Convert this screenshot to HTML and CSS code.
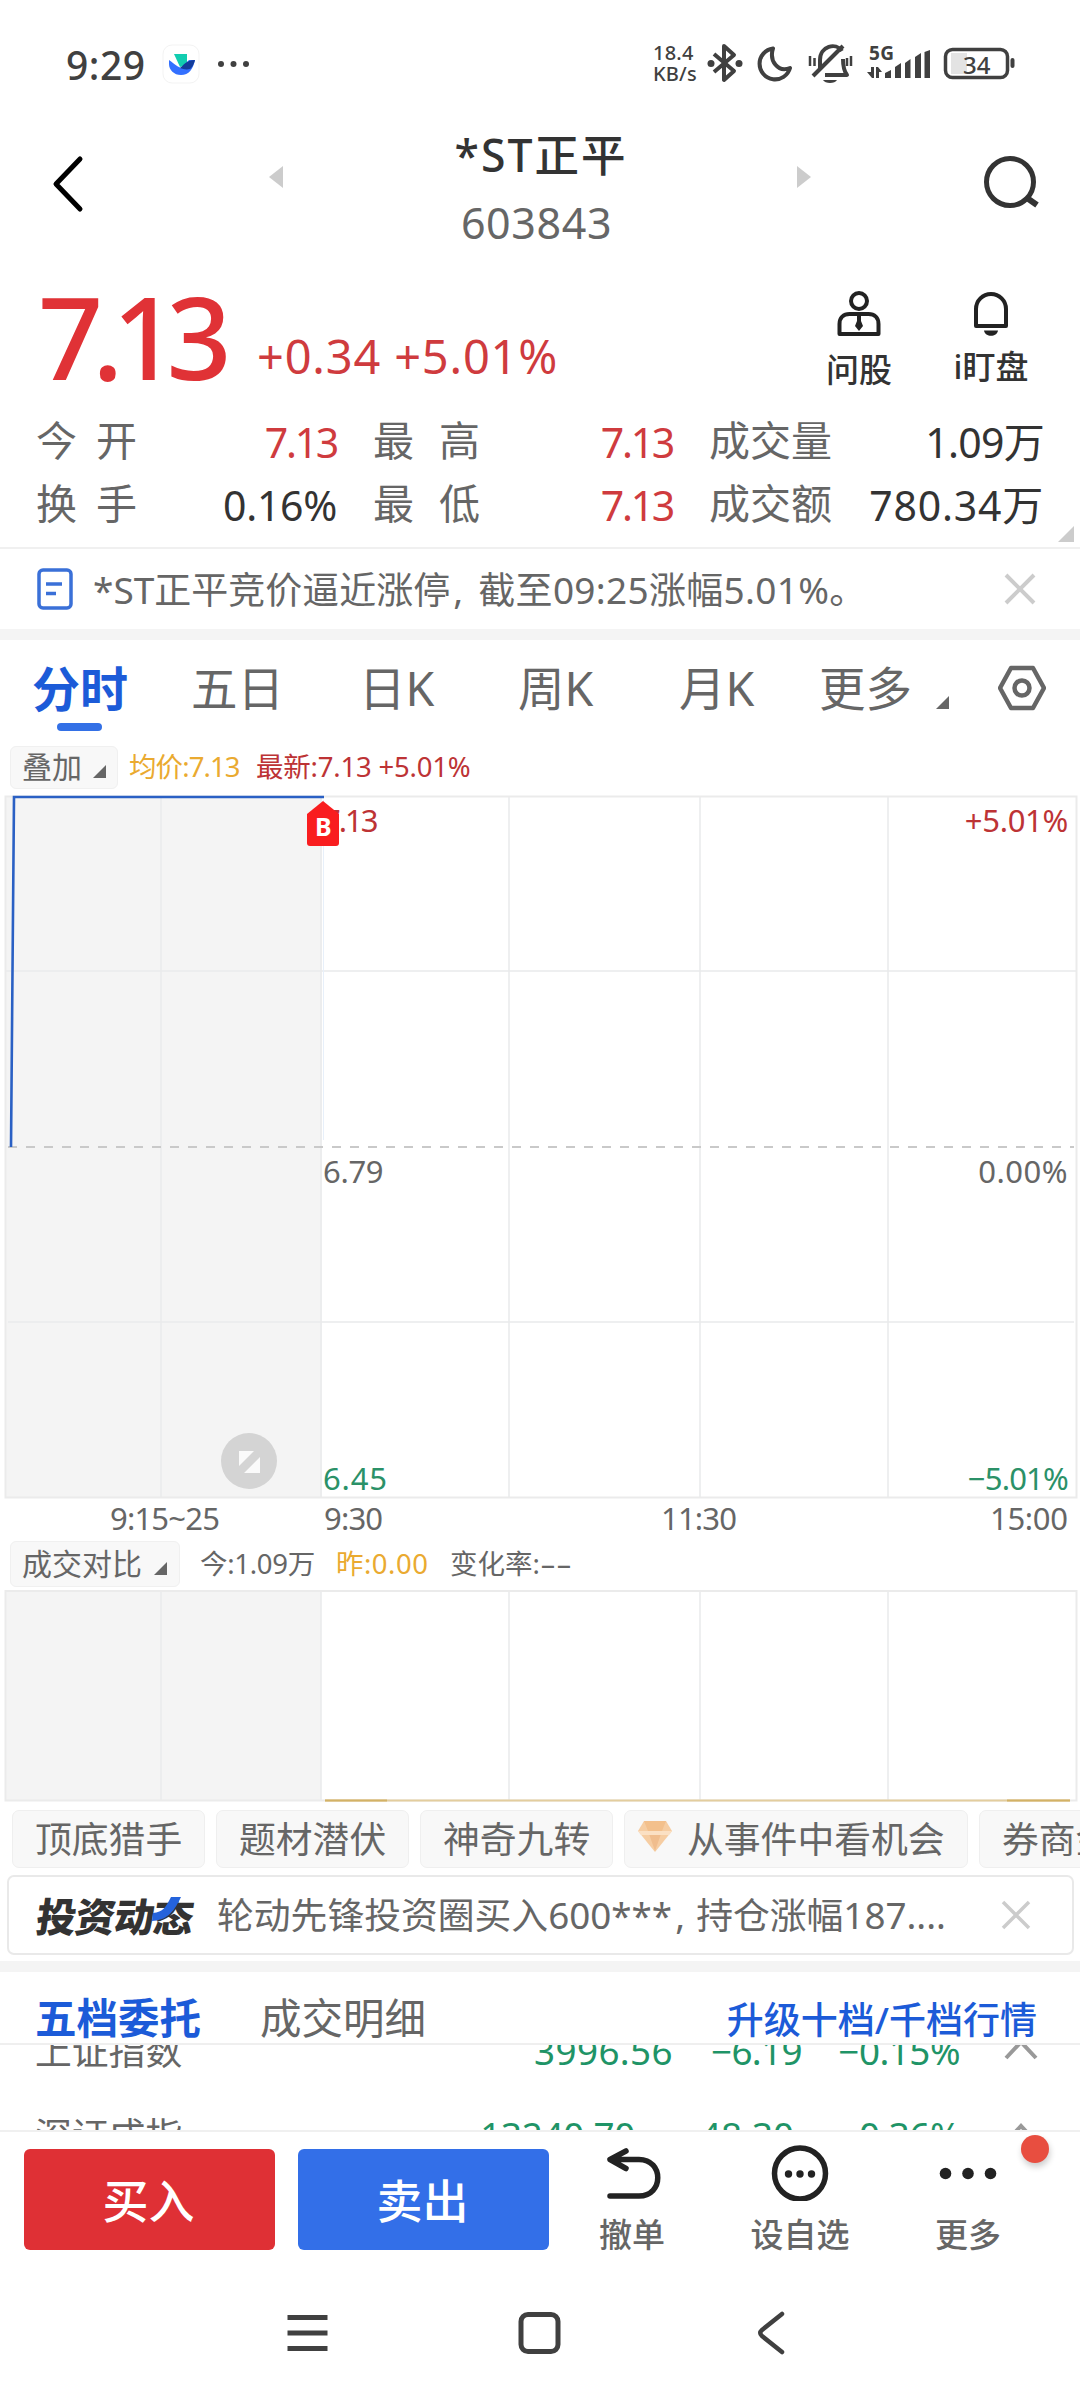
FILE: index.html
```html
<!DOCTYPE html>
<html lang="zh-CN">
<head>
<meta charset="utf-8">
<title>*ST正平 603843</title>
<link rel="stylesheet" href="styles.css">
</head>
<body>
<div class="screen">
  <header class="status">
    <span class="time">9:29</span>
    <svg class="app-mark" width="38" height="40" viewBox="0 0 38 40"><rect x="1" y="1" width="36" height="38" rx="9" fill="#fff" stroke="#f3f3f3"/><path d="M12 10h13v11l-7 2z" fill="#12cdb0"/><path d="M7 16c3 2 7 6 12 8l8-8h6c-2 9-6 15-14 15-7 0-12-5-12-11z" fill="#3370ff"/><path d="M18 24c3-2 6-8 15-8-1 4-3 8-5 9-4 1-7 0-10-1z" fill="#133c9a"/></svg>
    <svg class="status-dots" width="34" height="8" viewBox="0 0 34 8" fill="#404040"><circle cx="4" cy="4" r="3"/><circle cx="16.500" cy="4" r="3"/><circle cx="29" cy="4" r="3"/></svg>
    <span class="speed"><span class="speed-num">18.4</span><span class="speed-unit">KB/s</span></span>
    <svg class="status-icons" width="362" height="50" viewBox="700 40 362 50" fill="none" stroke="#404040" stroke-width="4" stroke-linejoin="round">
      <path d="M714 54l20 17-10 9V46l10 9-20 17"/>
      <g fill="#404040" stroke="none"><circle cx="711" cy="63.500" r="3.500"/><circle cx="739" cy="63.500" r="3.500"/></g>
      <path d="M773 48.500a15.500 15.500 0 1 0 17 19.500c-12 5-21-7-17-19.500z"/>
      <path d="M820 70V60c0-14 16-18 22-9" stroke-width="4"/>
      <path d="M843 59c0 8 1 12 4 16h-22"/>
      <path d="M813 76l30-30"/>
      <path d="M823 80h14c-2 4-12 4-14 0z" fill="#404040" stroke="none"/>
      <path d="M810 56v10M814.500 58v8M847 58v8M851 56v10" stroke-width="2.500"/>
      <g fill="#404040" stroke="none"><path d="M885 78v-5l6-3v8zM895 78V67l6-4v15zM905 78V63l5.500-4v19zM915 78V57l6-4v25zM924.500 78V52l5.500-2v28zM871 67h3v11h-2l-5-6h4zM876 67h2l4 5h-3v6h-3z"/></g>
      <rect x="945.500" y="49.500" width="62" height="28" rx="7" stroke-width="3.500"/>
      <path d="M951 53h16v21h-16z" fill="#e3e3e3" stroke="none"/>
      <path d="M1012.500 60v6" stroke-linecap="round" stroke-width="4"/>
    </svg>
    <span class="net">5G</span><span class="battery">34</span>
  </header>

  <section class="titlebar">
    <svg class="back" width="40" height="64" viewBox="0 0 40 64"><path d="M31 7L7 32l24 25" fill="none" stroke="#000" stroke-width="5" stroke-linecap="round" stroke-linejoin="round"/></svg>
    <svg class="prev" width="16" height="24" viewBox="0 0 16 24"><path d="M15 1v22L1 12z" fill="#ccc"/></svg>
    <div class="stock"><div class="name">*ST正平</div><div class="code">603843</div></div>
    <svg class="next" width="16" height="24" viewBox="0 0 16 24"><path d="M1 1v22l14-11z" fill="#ccc"/></svg>
    <svg class="search" width="64" height="64" viewBox="0 0 64 64"><g fill="none" stroke="#333" stroke-width="5"><circle cx="30" cy="32" r="23.500"/><path d="M47 48l10 7" stroke-width="6"/></g></svg>
  </section>

  <section class="quote">
    <span class="price">7.13</span>
    <span class="change">+0.34 +5.01%</span>
    <div class="tool ask"><svg width="48" height="50" viewBox="0 0 48 50" fill="none" stroke="#222" stroke-width="4"><circle cx="24" cy="12" r="8"/><path d="M4.500 45V35c0-6 4-10 10-10h19c6 0 10 4 10 10v10z" stroke-linejoin="round"/><path d="M22 26h4v6l2 5-4 5-4-5 2-5z" fill="#222" stroke="none"/></svg><span>问股</span></div>
    <div class="tool watch"><svg width="48" height="50" viewBox="0 0 48 50"><path d="M9 37V20a15 15 0 0 1 30 0v17z" fill="none" stroke="#222" stroke-width="4" stroke-linejoin="round"/><path d="M17 41.500h14c-1 7-13 7-14 0z" fill="#222"/></svg><span>i盯盘</span></div>
  </section>

  <section class="stats">
    <div class="stat s1"><span class="wide">今<i></i>开</span><b class="up">7.13</b></div>
    <div class="stat s2"><span class="wide">最<i></i>高</span><b class="up">7.13</b></div>
    <div class="stat s3"><span>成交量</span><b class="vol">1.09万</b></div>
    <div class="stat s1"><span class="wide">换<i></i>手</span><b class="rate">0.16%</b></div>
    <div class="stat s2"><span class="wide">最<i></i>低</span><b class="up">7.13</b></div>
    <div class="stat s3"><span>成交额</span><b class="amount">780.34万</b></div>
    <svg class="expand" width="16" height="16" viewBox="0 0 16 16"><path d="M16 0v16H0z" fill="#ccc"/></svg>
  </section>

  <section class="alert">
    <svg width="36" height="42" viewBox="0 0 36 42" fill="none" stroke="#3a70d8" stroke-width="3.500"><rect x="2" y="2" width="32" height="38" rx="4"/><path d="M9 16h16M9 25.500h10"/></svg>
    <span>*ST正平竞价逼近涨停<em class="comma">,</em><em class="tail">截至09:25涨幅5.01%。</em></span>
    <svg class="close" width="34" height="34" viewBox="0 0 34 34"><path d="M3 3l28 28M31 3L3 31" stroke="#ccc" stroke-width="4"/></svg>
  </section>
  <div class="band"></div>

  <nav class="tabs">
    <span class="active">分时</span><span>五日</span><span>日K</span><span>周K</span><span>月K</span><span>更多</span>
    <svg class="tri" width="13" height="13" viewBox="0 0 13 13"><path d="M13 0v13H0z" fill="#666"/></svg>
    <svg class="settings" width="48" height="46" viewBox="0 0 48 46" fill="none" stroke="#666" stroke-width="4.500"><path d="M13 3h22l11 20-11 20H13L2 23z" stroke-linejoin="round"/><circle cx="24" cy="23" r="7.500"/></svg>
  </nav>

  <div class="legend top">
    <span class="picker">叠加<svg width="13" height="13" viewBox="0 0 13 13"><path d="M13 0v13H0z" fill="#666"/></svg></span>
    <span class="avg">均价:7.13</span><span class="last">最新:7.13 +5.01%</span>
  </div>

  <section class="chart">
    <svg width="1080" height="706" viewBox="0 795 1080 706" fill="none">
      <rect x="5" y="796" width="317" height="702" fill="#f4f4f4"/>
      <path d="M161 797v701M321 797v701M509 797v701M700 797v701M888 797v701M5 971h1072M8 1322h1066" stroke="#e9eaeb" stroke-width="1.500"/>
      <rect x="5.500" y="796.500" width="1071" height="701" stroke="#ebebeb" stroke-width="2"/>
      <path d="M8 1147h1066" stroke="#c9c9c9" stroke-width="2" stroke-dasharray="9 9"/>
      <path d="M323.500 800v340" stroke="#e8f0fa"/>
      <path d="M11 1147L14 797H324" stroke="#2a60c4" stroke-width="2.600"/>
      <circle cx="249" cy="1461" r="28" fill="#d4d4d4"/>
      <path d="M239 1451h15l-15 15zM260 1457v16h-16z" fill="#fafafa"/>
    </svg>
    <span class="lb p-top">7.13</span><span class="lb r-top">+5.01%</span>
    <span class="lb p-mid">6.79</span><span class="lb r-mid">0.00%</span>
    <span class="lb p-low">6.45</span><span class="lb r-low">−5.01%</span>
    <span class="marker"><svg width="32" height="46" viewBox="0 0 32 46"><path d="M0 13L16 0l16 13v29q0 3-3 3H3q-3 0-3-3z" fill="#f91d1f"/></svg><b>B</b></span>
  </section>
  <div class="axis"><span class="t1">9:15~25</span><span class="t2">9:30</span><span class="t3">11:30</span><span class="t4">15:00</span></div>

  <div class="legend low">
    <span class="picker">成交对比<svg width="13" height="13" viewBox="0 0 13 13"><path d="M13 0v13H0z" fill="#666"/></svg></span>
    <span class="today">今:1.09万</span><span class="yest">昨:0.00</span><span class="ratio">变化率:<em class="dashes">--</em></span>
  </div>

  <svg class="volume" width="1080" height="214" viewBox="0 1589 1080 214" fill="none">
    <rect x="5" y="1590" width="316" height="211" fill="#f4f4f4"/>
    <path d="M161 1591v210M321 1591v210M509 1591v210M700 1591v210M888 1591v210" stroke="#e9eaeb" stroke-width="1.500"/>
    <rect x="5.500" y="1591" width="1071" height="209.500" stroke="#ebebeb" stroke-width="2"/>
    <path d="M325 1800.500h745" stroke="#e3cd9e" stroke-width="2"/><path d="M325 1800.500h62M1007 1800.500h63" stroke="#d3b266" stroke-width="2"/>
  </svg>

  <div class="chips">
    <span>顶底猎手</span><span>题材潜伏</span><span>神奇九转</span>
    <span class="gem"><svg width="34" height="31" viewBox="0 0 34 31"><path d="M6 0h22l6 10-17 21L0 10z" fill="#f6cda2"/><path d="M6 0h22l-4 10H10z" fill="#f3c08c"/><path d="M10 10h14l-7 20z" fill="#f0bd8d"/><path d="M0 10h34l-3 4H3z" fill="#fbe0c3"/></svg>从事件中看机会</span>
    <span>券商金股</span>
  </div>

  <section class="feed">
    <span class="feed-logo"><b>投资动态</b><svg width="32" height="26" viewBox="0 0 32 26"><path d="M20 0h10C22 17 15 23 1 24l1-8c10-1 13-6 18-16z" fill="#2463dc"/></svg></span>
    <span class="feed-text">轮动先锋投资圈买入600***<em class="comma">,</em>持仓涨幅187....</span>
    <svg class="close" width="30" height="30" viewBox="0 0 30 30"><path d="M2 2l26 26M28 2L2 28" stroke="#ccc" stroke-width="3.500"/></svg>
  </section>
  <div class="band low-band"></div>

  <nav class="order-tabs"><span class="on">五档委托</span><span class="off">成交明细</span><span class="upgrade">升级十档/千档行情</span></nav>

  <section class="indices">
    <div class="row"><span>上证指数</span><b class="i1">3996.56</b><b class="i2">−6.19</b><b class="i3">−0.15%</b><svg width="34" height="26" viewBox="0 0 34 26"><path d="M2 20L17 4l15 16" fill="none" stroke="#999" stroke-width="4"/></svg></div>
    <div class="row second"><span>深证成指</span><b class="i1">13240.70</b><b class="i2">−48.30</b><b class="i3">−0.36%</b><svg width="34" height="26" viewBox="0 0 34 26"><path d="M2 20L17 4l15 16" fill="none" stroke="#999" stroke-width="4"/></svg></div>
  </section>

  <footer class="actions">
    <button class="buy">买入</button><button class="sell">卖出</button>
    <div class="act a1"><svg width="60" height="60" viewBox="0 0 60 60" fill="none" stroke="#222" stroke-width="5.500" stroke-linecap="round" stroke-linejoin="round"><path d="M24 10L8 18.500l16 9M8 18.500h29c25 0 25 36.500 0 36.500H8"/></svg><span>撤单</span></div>
    <div class="act a2"><svg width="60" height="60" viewBox="0 0 60 60" fill="#222"><circle cx="30" cy="32.500" r="25.500" fill="none" stroke="#222" stroke-width="5.500"/><circle cx="18.500" cy="33" r="3.700"/><circle cx="30" cy="33" r="3.700"/><circle cx="41.500" cy="33" r="3.700"/></svg><span>设自选</span></div>
    <div class="act a3"><svg width="60" height="60" viewBox="0 0 60 60" fill="#222"><circle cx="7.500" cy="32.500" r="5.800"/><circle cx="30" cy="32.500" r="5.800"/><circle cx="52.500" cy="32.500" r="5.800"/></svg><span>更多</span></div>
    <i class="badge"></i>
  </footer>

  <nav class="sysnav">
    <svg width="44" height="44" viewBox="0 0 44 44" stroke="#404040" stroke-width="5"><path d="M2.500 6.500h40M2.500 22h40M2.500 37.500h40"/></svg>
    <svg width="44" height="44" viewBox="0 0 44 44"><rect x="4" y="3.500" width="37" height="37" rx="7" fill="none" stroke="#404040" stroke-width="5"/></svg>
    <svg width="44" height="44" viewBox="0 0 44 44"><path d="M33 3L13 19q-3.500 3 0 6l20 16" fill="none" stroke="#404040" stroke-width="4.500" stroke-linejoin="round" stroke-linecap="round"/></svg>
  </nav>
</div>
</body>
</html>
```

FILE: styles.css
```css
* { box-sizing: border-box; }
body { margin: 0; background: #fff; }
svg { display: block; flex: none; }
b, i, em { font-style: normal; font-weight: 400; }
.screen {
  width: 1080px; height: 2400px; overflow: hidden; position: relative;
  display: flex; flex-direction: column; background: #fff; color: #666;
  font-family: "Noto Sans", "Noto Sans CJK SC", sans-serif;
  white-space: nowrap; line-height: 1;
}
.screen > * { flex: none; }

/* status bar */
.status { height: 128px; display: flex; align-items: center; position: relative; color: #404040; padding-left: 66px; }
.time { font-size: 39px; font-weight: 500; width: 96px; letter-spacing: 0.5px; }
.status-dots { margin-left: 17px; }
.speed { position: absolute; left: 653px; top: 43px; font-size: 20px; display: flex; flex-direction: column; gap: 1px; font-weight: 500; letter-spacing: 0.2px; }
.status-icons { position: absolute; left: 700px; top: 40px; }
.net { position: absolute; left: 869px; top: 44px; font-size: 19px; font-weight: 700; letter-spacing: 0.5px; }
.battery { position: absolute; left: 963px; top: 53px; font-size: 24px; font-weight: 500; }

/* title */
.titlebar { height: 134px; display: flex; position: relative; }
.back { margin: 24px 0 0 49px; }
.prev { margin: 37px 0 0 179px; }
.stock { width: 512px; display: flex; flex-direction: column; align-items: center; }
.name { margin-top: 5px; margin-left: 2px; font-size: 44.5px; font-weight: 500; color: #333; letter-spacing: 2px; }
.code { margin-top: 23px; margin-right: 7px; font-size: 43px; letter-spacing: 0.6px; }
.next { margin: 37px 0 0 0; }
.search { margin: 22px 0 0 168px; }

/* quote */
.quote { height: 147px; display: flex; color: #222; }
.price { width: 219px; margin-left: 38px; padding-top: 17px; font-size: 114px; font-weight: 500; color: #e03236; letter-spacing: -11px; }
.change { width: 561px; padding-top: 71px; font-size: 47px; color: #cf3b3e; letter-spacing: 0.8px; }
.tool { width: 132px; padding-top: 27px; display: flex; flex-direction: column; align-items: center; gap: 11px; font-size: 33px; font-weight: 500; color: #333; }
.ask { margin-left: -25px; }
.ask span { padding-top: 3px; }

/* stats */
.stats { height: 140px; padding: 0 36px 0 36px; display: grid; grid-template-columns: 301px 336px 371px; grid-template-rows: 63px 63px; position: relative; border-bottom: 2px solid #f0f0f0; }
.stat { height: 63px; display: flex; justify-content: space-between; align-items: center; font-size: 41px; }
.s2, .s3 { padding-left: 36px; }
.wide i { display: inline-block; width: 19px; }
.s2 .wide i { width: 25px; }
.stat b { color: #333; padding-top: 3px; }
.stat .vol { letter-spacing: -0.7px; }
.stat .rate { letter-spacing: -0.3px; }
.stat .amount { letter-spacing: 0.8px; }
.stat .up { color: #cf3b3e; letter-spacing: -2.3px; }
.expand { position: absolute; right: 6px; bottom: 5px; }

/* alert */
.alert { height: 80px; display: flex; align-items: center; padding-left: 37px; font-size: 37px; }
.alert span { width: 910px; margin-left: 20px; }
.comma { display: inline-block; width: 24px; padding-left: 3px; }
.alert .comma { width: 28px; }
.tail { letter-spacing: 0.3px; }
.band { height: 11px; background: #f4f4f4; }

/* period tabs */
.tabs { height: 105px; display: grid; grid-template-columns: 159px 168px 159px 161px 140px 117px 62px 48px; padding: 0 0 8px 32px; align-items: center; font-size: 46.5px; }
.tabs .active { color: #1c5bd8; font-weight: 700; font-size: 48px; position: relative; }
.active::after { content: ""; position: absolute; left: 25px; bottom: -18px; width: 45px; height: 8px; border-radius: 4px; background: #3370e6; }
.tri { margin-top: 28px; }
.settings { margin-top: -2px; }

/* legends */
.legend { display: flex; padding-left: 10px; font-size: 27.5px; align-items: center; }
.legend.top { height: 50px; padding-bottom: 6px; }
.picker { height: 43px; border: 1px solid #f0f0f0; border-radius: 6px; background: #f8f8f8; font-size: 30px; display: flex; align-items: center; padding: 0 11px 0 11px; gap: 11px; }
.picker svg { margin-top: 9px; }
.avg { color: #eaaa30; margin-left: 11px; width: 127px; letter-spacing: -0.9px; }
.last { color: #bd3335; letter-spacing: -0.2px; }

/* price chart */
.chart { height: 706px; position: relative; }
.lb { position: absolute; font-size: 31px; letter-spacing: -0.3px; }
.p-top, .p-mid, .p-low { left: 323px; }
.r-top, .r-mid, .r-low { right: 12px; }
.p-top, .r-top { top: 10px; color: #bd3335; }
.p-top { letter-spacing: -2px; }
.p-mid, .r-mid { top: 361px; }
.r-mid { letter-spacing: 0.5px; }
.p-low, .r-low { top: 668px; color: #2b9168; }
.p-low { letter-spacing: 0.8px; }
.r-low { letter-spacing: -0.8px; }
.marker { position: absolute; left: 307px; top: 6px; }
.marker b { position: absolute; left: 8px; top: 13px; font-size: 25px; font-weight: 700; color: #fff; }
.axis { height: 35px; display: grid; grid-template-columns: 214px 337px 329px 74px; padding-left: 110px; align-items: center; font-size: 31px; letter-spacing: -0.8px; }
.t4 { letter-spacing: -0.3px; }
.legend.low { height: 53px; padding-top: 2px; }
.low .picker { height: 46px; padding-right: 12px; gap: 12px; }
.today { margin-left: 20px; width: 136px; letter-spacing: -0.3px; }
.yest { color: #eaaa30; width: 114px; letter-spacing: 0.5px; }
.dashes { display: inline-block; transform: scaleX(1.8); transform-origin: left; }

/* shortcuts */
.chips { height: 65px; margin-top: 7px; padding-left: 12px; display: flex; gap: 11px; overflow: hidden; }
.chips > span { height: 58px; flex: none; border: 1px solid #efefef; border-radius: 7px; background: #f8f8f8; padding: 0 22px; font-size: 36.8px; display: flex; align-items: center; }
.chips > span:not(.gem) { width: 193px; }
.chips .gem { width: 344px; padding: 0 0 0 13px; gap: 15px; }
.gem svg { margin-top: -6px; }

/* feed card */
.feed { height: 80px; margin: 0 6px 0 7px; border: 2px solid #e9e9e9; border-radius: 7px; display: flex; align-items: center; }
.feed-logo { position: relative; width: 182px; padding-left: 28px; }
.feed-logo b { display: block; font-family: "Noto Sans CJK SC", sans-serif; font-size: 40px; font-weight: 900; color: #333; letter-spacing: -1px; transform: skewX(-8deg); }
.feed-logo svg { position: absolute; left: 142px; top: 2px; }
.feed-text { font-size: 36.8px; width: 810px; padding-left: 26px; }
.low-band { margin-top: 6px; }

/* order book tabs */
.order-tabs { height: 73px; display: flex; align-items: center; padding: 23px 43px 0 35px; border-bottom: 2px solid #efefef; font-size: 41.5px; }
.on { color: #1c5bd8; font-weight: 700; width: 225px; }
.upgrade { margin-left: auto; color: #1c5bd8; font-size: 37px; font-weight: 500; }

/* index strip */
.indices { height: 85px; overflow: hidden; font-size: 36.8px; }
.row { height: 86px; margin-top: -37px; padding-left: 35px; display: flex; align-items: center; }
.row.second { margin-top: -2px; }
.row b { color: #1f9467; text-align: right; }
.row span { width: 338px; }
.i1 { width: 300px; letter-spacing: 0.4px; } .i2 { width: 129px; letter-spacing: -0.6px; } .i3 { width: 158px; letter-spacing: -0.5px; }
.second .i1 { width: 262px; letter-spacing: -0.3px; }
.second .i2 { width: 159px; letter-spacing: 0; }
.second .i3 { width: 166px; }
.row svg { margin-left: 44px; }

/* trade actions */
.actions { height: 140px; border-top: 2px solid #f0f0f0; padding: 17px 0 0 24px; display: flex; position: relative; }
button { width: 251px; height: 101px; margin: 0 23px 0 0; padding: 0 2px 0 0; border: 0; border-radius: 6px; color: #fff; font: 500 46px/1 "Noto Sans", "Noto Sans CJK SC", sans-serif; }
.buy { background: #df3035; }
.sell { background: #336fe8; }
.act { width: 140px; margin-top: -8px; display: flex; flex-direction: column; align-items: center; gap: 17px; font-size: 33px; font-weight: 500; }
.a1 { margin-left: -10px; }
.a2 { margin-left: 28px; }
.a3 { margin-left: 28px; }
.badge { position: absolute; left: 1021px; top: 3px; width: 28px; height: 28px; border-radius: 50%; background: #e84e40; box-shadow: 1px 4px 6px #0003; }

/* system navigation */
.sysnav { height: 129px; padding: 41px 0 0 285px; display: flex; gap: 188px; }
```
